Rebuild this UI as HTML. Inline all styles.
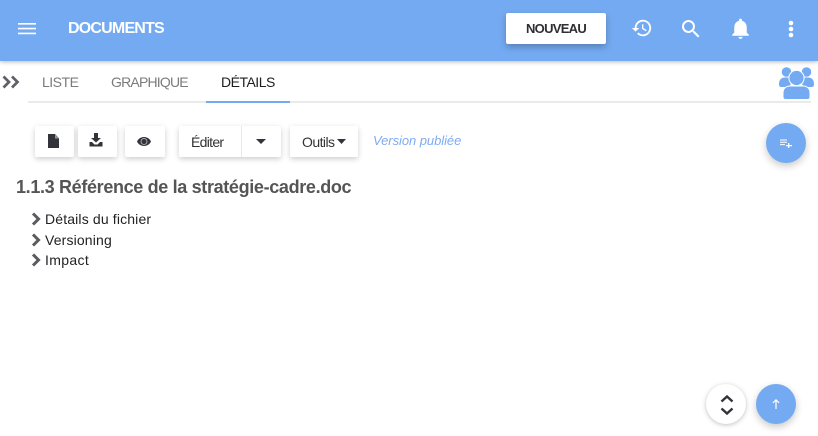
<!DOCTYPE html>
<html lang="fr">
<head>
<meta charset="utf-8">
<title>Documents</title>
<style>
html,body{margin:0;padding:0;width:818px;height:436px;overflow:hidden;background:#fff;font-family:"Liberation Sans",sans-serif}
.a{position:absolute;white-space:nowrap}
.hdr{left:0;top:0;width:818px;height:61px;background:#74aaf1;box-shadow:0 1px 4px rgba(0,0,0,.28)}
.btn{position:absolute;background:#fff;border-radius:2px;box-shadow:0 2px 6px rgba(0,0,0,.2);height:31px;top:126px}
.fab{position:absolute;width:40px;height:40px;border-radius:50%;background:#74aaf1;box-shadow:0 3px 8px rgba(0,0,0,.22)}
svg{position:absolute;display:block}
.tab{top:74px;font-size:14px;line-height:16px;color:#7b7b7b}
.row{left:45px;font-size:14px;line-height:16px;color:#222;letter-spacing:.15px}
</style>
</head>
<body>
<div class="a hdr"></div>

<svg style="left:18px;top:23px" width="18" height="12" viewBox="0 0 18 12"><path d="M0 0h18v1.600H0zM0 4.800h18v1.600H0zM0 9.600h18v1.600H0z" fill="#fff"/></svg>
<div class="a" style="left:68px;top:20px;font-size:16px;line-height:18px;font-weight:700;color:#fff;letter-spacing:-.8px">DOCUMENTS</div>

<div style="position:absolute;left:506px;top:13px;width:100px;height:31px;background:#fff;border-radius:2px;box-shadow:0 3px 7px rgba(0,0,0,.25)"></div>
<div class="a" style="left:506px;top:21px;width:100px;text-align:center;font-size:13px;line-height:16px;font-weight:700;color:#2f2f33;letter-spacing:-.72px">NOUVEAU</div>

<svg style="left:631px;top:17px" width="22" height="22" viewBox="0 0 24 24"><path fill="#fff" d="M13 3a9 9 0 0 0-9 9H1l3.900 3.900L9 12H6a7 7 0 1 1 2.050 4.950l-1.420 1.420A9 9 0 1 0 13 3zm-1 5v5l4.250 2.520.77-1.280-3.520-2.090V8z"/></svg>
<svg style="left:679px;top:17px" width="24" height="24" viewBox="0 0 24 24"><path fill="#fff" d="M15.500 14h-.79l-.28-.27A6.470 6.470 0 0 0 16 9.500 6.500 6.500 0 1 0 9.500 16c1.610 0 3.090-.59 4.230-1.570l.27.28v.79l5 4.990L20.490 19zm-6 0A4.500 4.500 0 1 1 14 9.500 4.490 4.490 0 0 1 9.500 14z"/></svg>
<svg style="left:728px;top:16px" width="25" height="25" viewBox="0 0 24 24"><path fill="#fff" d="M12 22c1.100 0 2-.9 2-2h-4c0 1.100.9 2 2 2zm6-6v-5c0-3.070-1.630-5.640-4.500-6.320V4c0-.83-.67-1.500-1.500-1.500s-1.500.67-1.500 1.500v.68C7.640 5.360 6 7.920 6 11v5l-2 2v1h16v-1z"/></svg>
<svg style="left:779px;top:17px" width="24" height="24" viewBox="0 0 24 24"><circle cx="12" cy="6" r="2.300" fill="#fff"/><circle cx="12" cy="12" r="2.300" fill="#fff"/><circle cx="12" cy="18" r="2.300" fill="#fff"/></svg>

<svg style="left:2px;top:75px" width="19" height="14" viewBox="0 0 19 14"><path fill="none" stroke="#5f6068" stroke-width="2.700" d="M1.500 1.500 7 7l-5.500 5.500M10 1.500 15.500 7 10 12.500"/></svg>

<div class="a tab" style="left:42px;letter-spacing:-.5px">LISTE</div>
<div class="a tab" style="left:111px;letter-spacing:-.8px">GRAPHIQUE</div>
<div class="a tab" style="left:221px;color:#1d1d1d;letter-spacing:-.5px">DÉTAILS</div>
<div class="a" style="left:28px;top:101px;width:783px;height:2px;background:#eaeaea"></div>
<div class="a" style="left:206px;top:101px;width:84px;height:2px;background:#74aaf1"></div>

<svg style="left:778px;top:66px" width="37" height="35" viewBox="0 0 37 35">
<g fill="#74aaf1">
<circle cx="8.500" cy="6" r="4.800"/><circle cx="28.500" cy="6" r="4.800"/>
<path d="M1 18c0-4.500 2.500-6.500 6-6.500h5c1 0 1.500 9-1 9.500H3C1.500 21 1 19.500 1 18zM36 18c0-4.500-2.500-6.500-6-6.500h-5c-1 0-1.500 9 1 9.500h8c1.500 0 2-1.500 2-3z"/>
</g>
<circle cx="18.500" cy="12" r="7.600" fill="#74aaf1" stroke="#fff" stroke-width="1"/>
<path d="M7.500 33.500c-1.500 0-2.500-1-2.500-2.500v-4c0-4.500 3-7 7-7h13c4 0 7 2.500 7 7v4c0 1.500-1 2.500-2.500 2.500z" fill="#74aaf1" stroke="#fff" stroke-width="1"/>
</svg>

<div class="btn" style="left:35px;width:39px"></div>
<svg style="left:47px;top:134px" width="13" height="14" viewBox="0 0 13 14"><path fill="#33333a" d="M1 0h7l4 4.500V14H1z"/><path fill="#fff" opacity=".5" d="M8 .5v4h3.600z"/></svg>
<div class="btn" style="left:78px;width:39px"></div>
<svg style="left:89px;top:133px" width="14" height="14" viewBox="0 0 14 14"><path fill="#33333a" d="M5 0h4v5h3L7 9.500 2 5h3zM.5 9H3l2.500 2.500h3L11 9h2.500v4.500H.5z"/></svg>
<div class="btn" style="left:125px;width:40px"></div>
<svg style="left:137px;top:136px" width="14" height="11" viewBox="0 0 14 11"><path fill="#33333a" d="M7 1c3.200 0 5.700 1.800 7 4.500C12.700 8.200 10.200 10 7 10S1.300 8.200 0 5.500C1.300 2.800 3.800 1 7 1z"/><circle cx="7" cy="5.500" r="3" fill="none" stroke="#fff" stroke-width=".8" opacity=".7"/></svg>

<div class="btn" style="left:179px;width:102px"></div>
<div class="a" style="left:241px;top:126px;width:1px;height:31px;background:#e9e9e9"></div>
<div class="a" style="left:191px;top:134px;font-size:14px;line-height:16px;color:#333;letter-spacing:-.7px">Éditer</div>
<svg style="left:256px;top:139px" width="10" height="5" viewBox="0 0 10 5"><path fill="#33333a" d="M0 0h10L5 5z"/></svg>

<div class="btn" style="left:290px;width:68px"></div>
<div class="a" style="left:302px;top:134px;font-size:14px;line-height:16px;color:#333;letter-spacing:-.55px">Outils</div>
<svg style="left:337px;top:139px" width="9" height="5" viewBox="0 0 9 5"><path fill="#33333a" d="M0 0h9L4.500 5z"/></svg>

<div class="a" style="left:373px;top:133px;font-size:13px;line-height:16px;font-style:italic;color:#7eabf0;letter-spacing:-.06px">Version publiée</div>

<div class="fab" style="left:766px;top:123px"></div>
<svg style="left:780px;top:139px" width="12" height="9" viewBox="0 0 12 9"><path fill="#fff" d="M0 .5h7v1H0zM0 2.800h7v1H0zM0 5.100h5v1H0zM8 4h1.300v2H12v1.200H9.300V9H8V7.200H6V6h2z"/></svg>

<div class="a" style="left:16px;top:177px;font-size:18px;line-height:21px;font-weight:700;color:#555;letter-spacing:-.34px">1.1.3 Référence de la stratégie-cadre.doc</div>

<svg style="left:31px;top:212px" width="10" height="14" viewBox="0 0 10 14"><path fill="none" stroke="#5a5a5f" stroke-width="3" d="M2 1.500 7.500 7 2 12.500"/></svg>
<div class="a row" style="top:211px">Détails du fichier</div>
<svg style="left:31px;top:233px" width="10" height="14" viewBox="0 0 10 14"><path fill="none" stroke="#5a5a5f" stroke-width="3" d="M2 1.500 7.500 7 2 12.500"/></svg>
<div class="a row" style="top:232px">Versioning</div>
<svg style="left:31px;top:253px" width="10" height="14" viewBox="0 0 10 14"><path fill="none" stroke="#5a5a5f" stroke-width="3" d="M2 1.500 7.500 7 2 12.500"/></svg>
<div class="a row" style="top:252px;letter-spacing:.35px">Impact</div>

<div class="fab" style="left:706px;top:384px;background:#fff;box-shadow:0 1px 5px rgba(0,0,0,.25)"></div>
<svg style="left:720px;top:395px" width="14" height="20" viewBox="0 0 14 20"><path fill="none" stroke="#33333a" stroke-width="2.400" d="M1.500 6.500 7 1.500l5.500 5M1.500 13.500 7 18.500l5.500-5"/></svg>
<div class="fab" style="left:756px;top:384px"></div>
<svg style="left:772px;top:399px" width="8" height="10" viewBox="0 0 8 10"><path fill="#fff" d="M4 0l3.500 3.500-.8.700L4.600 2.200V10H3.400V2.200L1.300 4.200.5 3.500z"/></svg>
</body>
</html>
